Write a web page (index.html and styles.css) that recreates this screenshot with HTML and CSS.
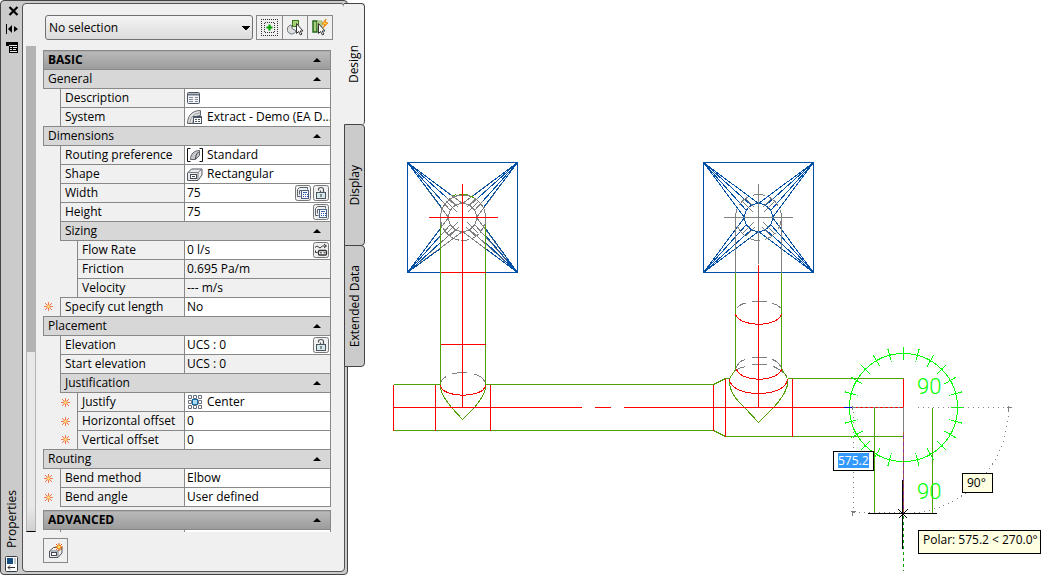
FILE: index.html
```html
<!DOCTYPE html>
<html lang="en">
<head>
<meta charset="utf-8">
<title>Properties</title>
<link rel="stylesheet" href="styles.css">
</head>
<body>
<svg class="defs" aria-hidden="true">
  <symbol id="up" viewBox="0 0 8 4"><path d="M0 4L4 0l4 4z"/></symbol>
  <symbol id="spark" viewBox="0 0 9 9"><path d="M4.500 0v9M0 4.500h9M1 1l7 7M8 1L1 8" stroke="#f07850" fill="none"/><circle cx="4.500" cy="4.500" r="1.800" fill="#ffe080" stroke="#f07030" stroke-width=".6"/></symbol>
  <symbol id="lock" viewBox="0 0 16 16"><rect x=".5" y=".5" width="15" height="15" rx="2" fill="#f0f0f0" stroke="#777"/><path d="M5.500 5.500V4.500Q5.500 2.500 8 2.500t2.500 2V7M7.500 7V5.500" fill="none" stroke="#4d555b" stroke-width="1.200"/><rect x="3.500" y="7.500" width="9" height="6" fill="#d4e8ee" stroke="#4d555b"/><path d="M8 9v3" stroke="#333"/></symbol>
  <symbol id="calc" viewBox="0 0 16 16"><rect x=".5" y=".5" width="15" height="15" rx="2" fill="#f0f0f0" stroke="#777"/><path d="M2.500 11.500v-7l2-2h8v2M2.500 11.500h3M4.500 9.500v-4h8" fill="none" stroke="#59626c"/><rect x="6.500" y="5.500" width="7" height="8" fill="#fff" stroke="#4c6285"/><path d="M8 7.500h4" stroke="#3565a8"/><path d="M8 9.500h1M10 9.500h1M12 9.500h1M8 11.500h1M10 11.500h1M12 11.500h1" stroke="#2458b0"/></symbol>
  <symbol id="flow" viewBox="0 0 16 16"><rect x=".5" y=".5" width="15" height="15" rx="2" fill="#f0f0f0" stroke="#777"/><path d="M2 5.500l2-1.500 3 2 2.500-2H13M11 2l2.500 2L11 6M2.500 8.500v2h2" fill="none" stroke="#333"/><rect x="5.500" y="8.500" width="8" height="4.500" rx="1" fill="#fff" stroke="#333" stroke-width="1.300"/><path d="M7 10.800h2M10.500 10.800h2" stroke="#222"/></symbol>
  <symbol id="sheet" viewBox="0 0 14 13"><rect x=".5" y=".5" width="12" height="11" rx="1" fill="#f3f3f6" stroke="#4b5464"/><path d="M1 2.500h11" stroke="#6f7785" stroke-width="2"/><path d="M2 5.500h4M8 5.500h3M2 7.500h4M8 7.500h3M2 9.500h4M8 9.500h3" stroke="#858d9a"/></symbol>
  <symbol id="duct" viewBox="0 0 16 16"><path d="M.5 14.500C.5 6 6 1.500 13.500 1.500v5C8 7 6 9 6 14.500z" fill="#e3e4e5" stroke="#5c6167"/><path d="M3 14C3 8 8 4 13 4" fill="none" stroke="#999"/><rect x="6.500" y="7.500" width="8" height="7" fill="#fff" stroke="#4b5464"/><path d="M7 8.500h7" stroke="#4b5464"/><path d="M8 10.500h2M11 10.500h2M8 12.500h2M11 12.500h2" stroke="#555"/></symbol>
  <symbol id="elbow" viewBox="0 0 16 14"><path d="M3.500.5h-3v13h3M12.500.5h3v13h-3" fill="none" stroke="#111"/><path d="M3.500 11.500C3.500 6 7 2.500 12.500 2.500v5L8.500 11.500z" fill="#c5c8ca" stroke="#5c6167"/><path d="M8.500 11c0-3 1-5 3-7" fill="none" stroke="#444"/></symbol>
  <symbol id="box" viewBox="0 0 16 13"><path d="M.5 12.500V5l4-4H15v6l-4 5.500z" fill="#ececee" stroke="#50565e"/><path d="M1 4.500h10V12M11 4.500L15 1" fill="none" stroke="#777d85"/><rect x="3.500" y="6.500" width="6" height="4" fill="#fff" stroke="#444a54"/><path d="M5 8.500h3" stroke="#444a54"/></symbol>
  <symbol id="center" viewBox="0 0 14 14"><g fill="#fff" stroke="#67707c"><path d="M.5.5h3v3h-3zM5.500.5h3v3h-3zM10.500.5h3v3h-3zM.5 5.500h3v3h-3zM10.500 5.500h3v3h-3zM.5 10.500h3v3h-3zM5.500 10.500h3v3h-3zM10.500 10.500h3v3h-3z"/></g><rect x="4.500" y="4.500" width="5" height="5" fill="#a8dcf2" stroke="#1769a5"/></symbol>
</svg>

<aside class="palette">
  <div class="strip">
    <button class="bare close" aria-label="Close"><svg width="11" height="10" viewBox="0 0 11 10"><path d="M1.500 1l8 8M9.500 1l-8 8" stroke="#000" stroke-width="2.200"/></svg></button>
    <button class="bare" aria-label="Auto-hide"><svg width="12" height="10" viewBox="0 0 12 10"><path d="M.5 0v10" stroke="#000"/><path d="M6 1v8L2 5zM8 2v6l4-3z"/></svg></button>
    <button class="bare" aria-label="Palette menu"><svg width="12" height="11" viewBox="0 0 12 11"><path d="M0 0h12v11H3V4H0z"/><path d="M3 3.500h8M4 5.500h2M7 5.500h4M4 7.500h2M7 7.500h3M4 9.500h7" stroke="#e8e8e8"/></svg></button>
    <span class="vertical title">Properties</span>
    <button class="bare" aria-label="Palette properties"><svg width="13" height="16" viewBox="0 0 13 16"><rect x=".5" y=".5" width="12" height="15" rx="1" fill="#fff" stroke="#333b46"/><rect x="2" y="2" width="6" height="6" fill="#174f83"/><path d="M10 2v6" stroke="#8090a0"/><path d="M3 11.500h7M5 9.500l-2 2 2 2" stroke="#333" fill="none"/></svg></button>
  </div>
  <div class="panel">
    <div class="toolbar">
      <select class="picker" aria-label="Selection"><option>No selection</option></select>
      <div class="tools">
        <button aria-label="Toggle pickadd"><svg width="17" height="17" viewBox="0 0 17 17"><path d="M0 .5h17M0 16.500h17M.5 0v17M16.500 0v17M4 3.500h10M4 13.500h10M3.500 4v10M13.500 4v10" fill="none" stroke="#333" stroke-dasharray="1 1"/><path d="M8.500 5.500v6M5.500 8.500h6" stroke="#00a000" stroke-width="2"/></svg></button>
        <button aria-label="Select objects"><svg width="17" height="17" viewBox="0 0 17 17"><path d="M4 6a4.500 4.500 0 1 0 5 6L7 10.500A2 2 0 0 1 5 8z" fill="#ddd" stroke="#667078"/><rect x="5.500" y="1.500" width="6" height="6" fill="#a8d078" stroke="#38781c"/><path d="M9.500 4.500v10l2-2 2 3.500 1.500-1-2-3h3z" fill="#fff" stroke="#333"/></svg></button>
        <button aria-label="Quick select"><svg width="17" height="17" viewBox="0 0 17 17"><rect x="1" y="2" width="4" height="11" fill="#a8d078" stroke="#286820" stroke-width="1.500"/><path d="M5 2h5v11H6" fill="#b4d488" stroke="#a0b080"/><path d="M6.500 4.500v10l2-2 2 3.500 1.500-1-2-3h3z" fill="#fff" stroke="#333"/><path d="M14 0l-4 5 3 .5L11 9l5-5-3-.5z" fill="#ffd24a" stroke="#ee8410"/></svg></button>
      </div>
    </div>
    <div class="body">
      <div class="scroll"><div class="thumb"></div></div>
      <div class="sheets">
      <table class="props">
        <colgroup><col class="ind"><col class="ind"><col class="name"><col></colgroup>
        <tbody>
        <tr class="major"><th colspan="4"><button>BASIC<svg><use href="#up"/></svg></button></th></tr>
        <tr class="group"><th colspan="4"><button>General<svg><use href="#up"/></svg></button></th></tr>
        <tr><td class="gap"></td><th colspan="2"><label for="desc">Description</label></th><td><div class="val"><svg width="14" height="13"><use href="#sheet"/></svg><input id="desc"></div></td></tr>
        <tr><td class="gap"></td><th colspan="2"><label for="sys">System</label></th><td><div class="val"><svg width="16" height="16"><use href="#duct"/></svg><input id="sys" value="Extract - Demo (EA D..."></div></td></tr>
        <tr class="group"><th colspan="4"><button>Dimensions<svg><use href="#up"/></svg></button></th></tr>
        <tr><td class="gap"></td><th colspan="2"><label for="rp">Routing preference</label></th><td><div class="val"><svg width="16" height="14"><use href="#elbow"/></svg><input id="rp" value="Standard"></div></td></tr>
        <tr><td class="gap"></td><th colspan="2"><label for="shape">Shape</label></th><td><div class="val"><svg width="16" height="13"><use href="#box"/></svg><input id="shape" value="Rectangular"></div></td></tr>
        <tr><td class="gap"></td><th colspan="2"><label for="w">Width</label></th><td><div class="val"><input id="w" value="75"><button class="bare" aria-label="Calculate width"><svg width="16" height="16"><use href="#calc"/></svg></button><button class="bare" aria-label="Lock width"><svg width="16" height="16"><use href="#lock"/></svg></button></div></td></tr>
        <tr><td class="gap"></td><th colspan="2"><label for="h">Height</label></th><td><div class="val"><input id="h" value="75"><button class="bare" aria-label="Calculate height"><svg width="16" height="16"><use href="#calc"/></svg></button></div></td></tr>
        <tr class="group"><td class="gap"></td><th colspan="3"><button>Sizing<svg><use href="#up"/></svg></button></th></tr>
        <tr><td class="gap" colspan="2"></td><th><label for="fr">Flow Rate</label></th><td><div class="val"><input id="fr" value="0 l/s"><button class="bare" aria-label="Flow from system"><svg width="16" height="16"><use href="#flow"/></svg></button></div></td></tr>
        <tr><td class="gap" colspan="2"></td><th><label for="fric">Friction</label></th><td class="ro"><div class="val"><input id="fric" value="0.695 Pa/m" readonly></div></td></tr>
        <tr><td class="gap" colspan="2"></td><th><label for="vel">Velocity</label></th><td class="ro"><div class="val"><input id="vel" value="--- m/s" readonly></div></td></tr>
        <tr><td class="gap"><svg><use href="#spark"/></svg></td><th colspan="2"><label for="cut">Specify cut length</label></th><td><div class="val"><input id="cut" value="No"></div></td></tr>
        <tr class="group"><th colspan="4"><button>Placement<svg><use href="#up"/></svg></button></th></tr>
        <tr><td class="gap"></td><th colspan="2"><label for="el">Elevation</label></th><td><div class="val"><input id="el" value="UCS : 0"><button class="bare" aria-label="Lock elevation"><svg width="16" height="16"><use href="#lock"/></svg></button></div></td></tr>
        <tr><td class="gap"></td><th colspan="2"><label for="sel">Start elevation</label></th><td class="ro"><div class="val"><input id="sel" value="UCS : 0" readonly></div></td></tr>
        <tr class="group"><td class="gap"></td><th colspan="3"><button>Justification<svg><use href="#up"/></svg></button></th></tr>
        <tr><td class="gap" colspan="2"><svg><use href="#spark"/></svg></td><th><label for="ju">Justify</label></th><td><div class="val"><svg width="16" height="14"><use href="#center"/></svg><input id="ju" value="Center"></div></td></tr>
        <tr><td class="gap" colspan="2"><svg><use href="#spark"/></svg></td><th><label for="ho">Horizontal offset</label></th><td><div class="val"><input id="ho" value="0"></div></td></tr>
        <tr><td class="gap" colspan="2"><svg><use href="#spark"/></svg></td><th><label for="vo">Vertical offset</label></th><td><div class="val"><input id="vo" value="0"></div></td></tr>
        <tr class="group"><th colspan="4"><button>Routing<svg><use href="#up"/></svg></button></th></tr>
        <tr><td class="gap"><svg><use href="#spark"/></svg></td><th colspan="2"><label for="bm">Bend method</label></th><td><div class="val"><input id="bm" value="Elbow"></div></td></tr>
        <tr><td class="gap"><svg><use href="#spark"/></svg></td><th colspan="2"><label for="ba">Bend angle</label></th><td><div class="val"><input id="ba" value="User defined"></div></td></tr>
        </tbody>
      </table>
      <table class="props">
        <colgroup><col class="ind"><col class="ind"><col class="name"><col></colgroup>
        <tbody>
        <tr class="major"><th colspan="4"><button>ADVANCED<svg><use href="#up"/></svg></button></th></tr>
        <tr><td class="gap"></td><th colspan="2"></th><td></td></tr>
        </tbody>
      </table>
      </div>
    </div>
    <div class="footer">
      <button aria-label="Property settings"><svg width="16" height="16" viewBox="0 0 16 16"><path d="M1.500 14.500V8l4-3.500H14V10l-4 4.500z" fill="#ececee" stroke="#50565e"/><path d="M2 8h8v6M10 8l4-3" fill="none" stroke="#777d85"/><rect x="3.500" y="9.500" width="5" height="3" fill="#fff" stroke="#444a54"/><path d="M11 0v8M7 4h8M8 1l6 6M14 1L8 7" stroke="#e06010"/><circle cx="11" cy="4" r="2" fill="#ffe060" stroke="#f08020"/></svg></button>
    </div>
  </div>
</aside>
<nav class="tabs">
  <button class="on"><span class="vertical">Design</span></button>
  <button><span class="vertical">Display</span></button>
  <button><span class="vertical">Extended Data</span></button>
</nav>

<main class="canvas">
  <svg class="drawing" viewBox="365 0 676 575" preserveAspectRatio="xMinYMin meet">
    <g class="lines" transform="translate(.5 .5)">
      <g class="gray">
        <path d="M407 162L448 217M407 162L450 210M407 162L455 205M407 162L462 203M517 162L476 217M517 162L474 210M517 162L469 205M517 162L462 203M407 272L448 217M407 272L450 224M407 272L455 229M407 272L462 231M517 272L476 217M517 272L474 224M517 272L469 229M517 272L462 231"/>
        <path d="M446 201l11 11M449 198l9 9M478 201l-11 11M475 198l-9 9M446 233l11-11M449 236l9-9M478 233l-11-11M475 236l-9-9"/>
        <circle cx="462" cy="217" r="14"/>
        <path d="M440 224v-7a22.500 22.500 0 0 1 45 0v7"/>
        <path d="M440 217a22.500 23 0 0 0 45 0" stroke-dasharray="9 2"/>
      </g>
      <g class="blue">
        <path d="M407 162h110v110H407z"/>
        <path d="M407 162L441 207M407 162L442 201M407 162L446 197M407 162L451 195M517 162L483 207M517 162L482 201M517 162L478 197M517 162L473 195M407 272L440 228M407 272L440 235M407 272L440 242M407 272L440 248M517 272L485 228M517 272L485 235M517 272L485 242M517 272L485 248"/>
        <path d="M703 162h110v110H703z"/>
        <path d="M703 162L744 217M703 162L746 210M703 162L751 205M703 162L758 203M813 162L772 217M813 162L770 210M813 162L765 205M813 162L758 203M703 272L744 217M703 272L746 224M703 272L751 229M703 272L758 231M813 272L772 217M813 272L770 224M813 272L765 229M813 272L758 231"/>
        <circle cx="758" cy="217" r="14"/>
      </g>
      <g class="gray">
        <circle cx="758" cy="217" r="23" stroke-dasharray="12 5"/>
        <path d="M735 272v-55M781 272v-55M723 217h69M758 183v80M742 201l11 11M745 198l9 9M774 201l-11 11M771 198l-9 9M742 233l11-11M745 236l9-9M774 233l-11-11M771 236l-9-9"/>
        <path d="M440 384a22.500 12 0 0 1 45 0" stroke-dasharray="10 6 16 6 14 0"/>
        <path d="M736 308q4-5 9-5M751 301h15M772 303q5 1 9 5v7M735 369q3-9 10-10M751 357h15M772 359q8 3 10 12M735 370q4-3 10-4M751 364h15M773 366q7 3 14 10"/>
      </g>
      <g class="green">
        <path d="M440 224v164M485 224v164M393 384h47M485 384h228l12-6h4M787 378h116M393 430h320l12 6h178M735 272v97M781 272v96l6 10M735 369l-6 9M874 407v106M932 407v106"/>
        <path d="M440 388q2 8 11 19l11 12 12-12q9-11 11-19M729 378v6c2 10 8 17 15 23l14 15 15-15c7-7 13-17 14-23v-6M453 195l3-1M458 194h9M470 196l4 1"/>
      </g>
      <g class="red">
        <path d="M428 217h69M462 183v224M440 272h45M440 344h45M393 407h188M594 407h16M623 407h280M393 384v46M435 384v46M490 384v46M713 384v46M725 378v58M792 378v58M903 378v29M758 264v143"/>
        <path d="M440 385c2 13 43 13 45 0M735 314c5 13 41 13 46 0M736 369c5 13 40 13 45 0M729 378c0 20 58 20 58 0"/>
      </g>
      <g class="tracker">
        <circle cx="903" cy="407" r="54"/>
        <circle class="ticks" cx="903" cy="407" r="54" pathLength="360"/>
      </g>
      <path d="M843 407h12" stroke="#00c"/>
      <path d="M857 407h46" stroke="#808080" stroke-dasharray="2 3"/>
      <g class="dots">
        <path d="M917 407h91M853 411v101M853 512h50M1008 411A105 105 0 0 1 903 513"/>
      </g>
      <path class="gray" d="M1006 407h5M1008 405v5M851 407h4M852 405v4M850 511h5M852 510v5M903 407v24"/>
      <path d="M903 431v82" stroke="#803890"/>
      <path d="M903 431v82" stroke="#a06030" stroke-dasharray="3 4"/>
      <path d="M903 515v55" stroke="#00a000" stroke-dasharray="3 3"/>
      <path d="M902 479v69M867 513h69M898 509l9 9M907 509l-9 9" stroke="#000"/>
    </g>
    <g class="cadtext"><text x="917" y="394">90</text><text x="917" y="499">90</text></g>
  </svg>
  <input class="tip length" aria-label="Length" value="575.2">
  <output class="tip angle">90°</output>
  <output class="tip polar">Polar: 575.2 &lt; 270.0°</output>
</main>
</body>
</html>
```
FILE: styles.css
```css
* { box-sizing: border-box; }
body {
  margin: 0;
  height: 100vh;
  display: flex;
  align-items: stretch;
  overflow: hidden;
  background: #fff;
  color: #000;
  font: 12px/16px "Open Sans", "Noto Sans", sans-serif;
}
button, input, select { font: inherit; color: inherit; }
svg { display: block; flex: none; }
.defs { position: absolute; width: 0; height: 0; }
.bare { display: block; padding: 0; border: 0; background: none; }

.palette {
  flex: none;
  width: 348px;
  display: flex;
  padding: 2px 2px 2px 0;
  border: 1px solid #444;
  border-radius: 4px;
  background: #cbcbcb;
}
.strip {
  width: 21px;
  display: flex;
  flex-direction: column;
  align-items: center;
  gap: 8px;
  padding: 3px 0 0;
}
.close { margin-left: 4px; }
.vertical { writing-mode: vertical-rl; transform: rotate(180deg); white-space: nowrap; }
.title { margin-top: auto; }
.panel {
  flex: 1;
  min-width: 0;
  display: flex;
  flex-direction: column;
  padding-top: 11px;
  border: 1px solid #555;
  border-radius: 4px;
  background: #f0f0f0;
}
.toolbar { display: flex; gap: 3px; padding: 0 11px 0 22px; height: 25px; }
.picker {
  flex: 1;
  min-width: 0;
  padding: 0 3px;
  appearance: none;
  border: 1px solid #707070;
  border-radius: 3px;
  background:
    linear-gradient(45deg, transparent 50%, #000 50%) right 6px center / 4px 4px no-repeat,
    linear-gradient(-45deg, transparent 50%, #000 50%) right 2px center / 4px 4px no-repeat,
    linear-gradient(#f4f4f4, #dcdcdc);
  background:
    linear-gradient(to top right, transparent 50%, #000 50%) right 6px center / 4px 4px no-repeat,
    linear-gradient(to top left, transparent 50%, #000 50%) right 2px center / 4px 4px no-repeat,
    linear-gradient(#f4f4f4, #dcdcdc);
}
.tools { display: flex; border: 1px solid #888; }
.tools button {
  width: 25px;
  display: grid;
  place-items: center;
  padding: 0;
  border: 0;
  border-left: 1px solid #888;
  background: #f0f0f0;
}
.tools button:first-child { border-left: 0; }

.body { flex: 1; min-height: 0; display: flex; margin-top: 6px; overflow: hidden; }
.scroll {
  flex: none;
  width: 10px;
  margin-left: 3px;
  border: 1px solid #b3b3b3;
  border-bottom-color: #000;
  background: linear-gradient(#e8e8e8 95%, #d0d0d0);
}
.thumb { height: 63%; background: #b3b3b3; }
.sheets { flex: 1; min-width: 0; margin: 4px 13px 0 7px; }
.props {
  width: 100%;
  table-layout: fixed;
  border-collapse: collapse;
  margin-bottom: 3px;
}
.ind { width: 17px; }
.name { width: 107px; }
.props tr { height: 19px; }
.props th, .props td {
  height: 19px;
  padding: 0;
  border: 1px solid #888;
  background: #fff;
  text-align: left;
  font-weight: normal;
  line-height: 16px;
  white-space: nowrap;
}
.props th { padding-left: 4px; background: #f0f0f0; }
.props .ro { background: #f0f0f0; }
.props .gap { border-style: none; background: none; }
.gap svg { width: 9px; height: 9px; margin: 0 7px 0 auto; }
.props .group th { background: #d7d7d7; }
.props .major th { background: linear-gradient(#b9b9b9, #9b9b9b); font-weight: bold; }
.props th button {
  width: 100%;
  display: flex;
  align-items: center;
  justify-content: space-between;
  padding: 0 9px 0 0;
  border: 0;
  background: none;
}
.props th button svg { width: 8px; height: 4px; }
.val { display: flex; align-items: center; gap: 2px; height: 16px; padding: 0 1px 0 2px; }
.val input { flex: 1; min-width: 0; height: 16px; padding: 0; border: 0; background: none; outline: 0; }
.val > svg + input { padding-left: 2px; margin-right: -1px; }
.footer { padding: 6px 20px 8px; }
.footer button {
  width: 25px;
  height: 25px;
  display: grid;
  place-items: center;
  padding: 0;
  border: 1px solid #888;
  background: #f0f0f0;
}

.tabs { flex: none; width: 21px; margin: 3px 0 0 -4px; z-index: 1; }
.tabs button {
  width: 21px;
  height: 122px;
  display: grid;
  place-items: center;
  margin-bottom: -1px;
  padding: 0;
  border: 1px solid #444;
  border-radius: 0 4px 4px 0;
  background: #cbcbcb;
}
.tabs .on { border-left: 0; border-bottom: 0; background: #f0f0f0; }

.canvas { flex: 1; min-width: 0; position: relative; }
.drawing { width: 100%; }
.lines { fill: none; stroke-width: 1; shape-rendering: crispEdges; }
.blue { stroke: #0050a5; }
.gray { stroke: #808080; }
.green { stroke: #50a000; }
.red { stroke: #f00; }
.tracker { stroke: #0f0; }
.ticks {
  stroke-width: 13;
  stroke-dashoffset: .5;
  stroke-dasharray: 1 14 1 14 1 14 1 14 1 14 1 29 1 14 1 14 1 14 1 14 1 29 1 14 1 14 1 14 1 14 1 14 1 14 1 14 1 14 1 14 1 14 1 14;
}
.dots { stroke: #808080; stroke-dasharray: 1 4; }
.cadtext { font: 300 22px Roboto, sans-serif; fill: #0f0; }
.tip { position: absolute; border: 1px solid #000; background: #ffffe1; white-space: nowrap; }
.length {
  left: 468px;
  top: 451px;
  width: 41px;
  height: 20px;
  padding: 1px 4px 2px 4px;
  background: linear-gradient(#39f, #39f) content-box, #fff;
  color: #fff;
}
.angle { left: 597px; top: 473px; padding: 1px 6px 1px 4px; }
.polar { left: 553px; top: 530px; width: 123px; padding: 1px 4px 5px; }
```
